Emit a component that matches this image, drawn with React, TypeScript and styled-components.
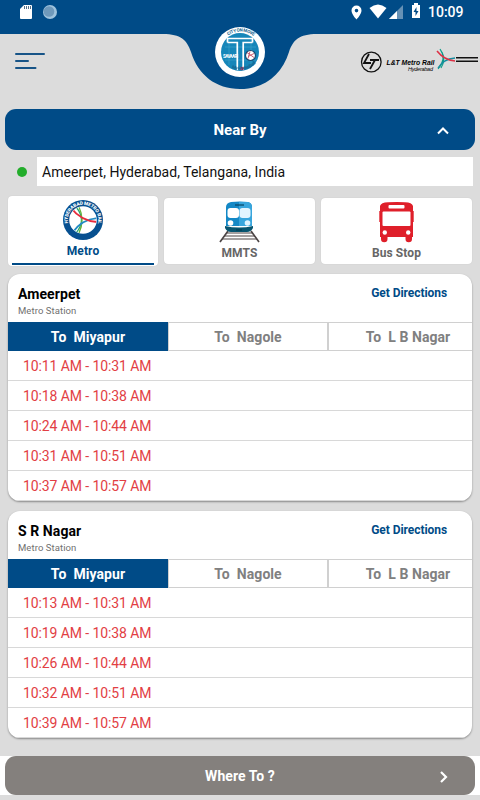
import React from 'react';
import styled, { createGlobalStyle } from 'styled-components';

const GlobalStyle = createGlobalStyle`
  * { box-sizing: border-box; }
  body { margin: 0; background: #dcdcdc; font-family: Roboto, sans-serif; }
  button { font-family: inherit; border: 0; padding: 0; margin: 0; background: none; }
  svg { display: block; flex: none; }
`;

const BLUE = '#004b87';

const Screen = styled.main`
  width: 480px;
  height: 800px;
  display: flex;
  flex-direction: column;
  overflow: hidden;
  background: #dcdcdc;
`;

const StatusBar = styled.div`
  height: 34px;
  flex: none;
  display: flex;
  align-items: flex-start;
  justify-content: space-between;
  padding: 0 16px 0 19px;
  background: ${BLUE};
  color: #fff;
`;

const StatusGroup = styled.div`
  display: flex;
  height: 24px;
  align-items: center;
`;

const Clock = styled.span`
  width: 36px;
  margin-left: 6px;
  font-size: 14px;
  line-height: 24px;
  font-weight: 500;
  white-space: nowrap;
`;

const Header = styled.header`
  height: 75px;
  flex: none;
  display: grid;
  grid-template-columns: 160px 160px 160px;
`;

const MenuButton = styled.button`
  width: 32px;
  height: 18px;
  margin: 18px 0 0 14px;
`;

const BrandMark = styled.div`
  margin-top: -14px;
`;

const Partner = styled.div`
  margin-top: 12px;
`;

const SectionBar = styled.button<{ $tone: string; $height: number }>`
  width: 470px;
  height: ${(p) => p.$height}px;
  flex: none;
  margin: 0 5px;
  display: grid;
  grid-template-columns: 1fr auto 1fr;
  align-items: center;
  border-radius: 11px;
  background: ${(p) => p.$tone};
  color: #fff;
`;

const SectionTitle = styled.span<{ $size: number; $spacing: number }>`
  grid-column: 2;
  font-size: ${(p) => p.$size}px;
  letter-spacing: ${(p) => p.$spacing}px;
  font-weight: 700;
`;

const SectionIcon = styled.span`
  justify-self: end;
  margin: 3px 25px 0 0;
`;

const LocationRow = styled.div`
  height: 29px;
  flex: none;
  margin: 7px 7px 0 17px;
  display: flex;
  align-items: center;
  gap: 10px;
`;

const Dot = styled.i`
  width: 10px;
  height: 10px;
  margin-top: 1px;
  border-radius: 50%;
  background: #23ad2b;
`;

const Address = styled.div`
  flex: 1;
  height: 29px;
  padding-left: 5px;
  background: #fff;
  color: #111;
  font-size: 14px;
  line-height: 30px;
  letter-spacing: 0.04px;
`;

const ModeTabs = styled.nav`
  height: 70px;
  flex: none;
  margin: 10px 8px 0;
  display: grid;
  grid-template-columns: 150px 151px 151px;
  gap: 6px;
  align-items: center;
`;

const ModeTab = styled.button<{ $active?: boolean }>`
  height: ${(p) => (p.$active ? 70 : 66)}px;
  display: flex;
  flex-direction: column;
  align-items: center;
  padding: ${(p) => (p.$active ? '3px 4px 0' : '3px 0 0')};
  border-radius: 4px;
  background: #fff;
  box-shadow: 0 0 1px rgba(0, 0, 0, 0.16);
  color: ${(p) => (p.$active ? BLUE : '#666')};
  font-size: 12px;
  font-weight: 700;
`;

const ModeName = styled.span<{ $active?: boolean }>`
  align-self: stretch;
  height: ${(p) => (p.$active ? 24 : 20)}px;
  line-height: 20px;
  letter-spacing: 0.1px;
  border-bottom: ${(p) => (p.$active ? `2px solid ${BLUE}` : '0')};
`;

const Stations = styled.section`
  display: flex;
  flex-direction: column;
  gap: 10px;
  padding: 8px 8px 0;
  height: 490px;
  flex: none;
`;

const Card = styled.article`
  height: 227px;
  flex: none;
  border-radius: 12px;
  overflow: hidden;
  background: #fff;
  box-shadow: 0 1px 2px rgba(0, 0, 0, 0.38);
`;

const CardHeader = styled.div`
  height: 48px;
  display: flex;
  justify-content: space-between;
  padding: 12px 25px 0 10px;
`;

const StationName = styled.h2`
  margin: 0;
  color: #000;
  font-size: 14px;
  line-height: 17px;
  font-weight: 700;
  letter-spacing: 0.08px;
`;

const StationKind = styled.div`
  color: #707070;
  font-size: 9.5px;
  line-height: 16px;
  letter-spacing: 0.08px;
`;

const Directions = styled.button`
  align-self: flex-start;
  color: ${BLUE};
  font-size: 12px;
  line-height: 15px;
  font-weight: 700;
  letter-spacing: -0.06px;
`;

const DirectionTabs = styled.div`
  display: grid;
  grid-template-columns: 160px 160px 144px;
`;

const DirectionTab = styled.button<{ $active?: boolean; $last?: boolean }>`
  height: 29px;
  border: 1px solid ${(p) => (p.$active ? BLUE : '#d0d0d0')};
  border-width: ${(p) => (p.$last ? '1px 0 1px 1px' : '1px')};
  padding-left: ${(p) => (p.$last ? 15 : 0)}px;
  background: ${(p) => (p.$active ? BLUE : '#fff')};
  color: ${(p) => (p.$active ? '#fff' : '#808080')};
  font-size: 14px;
  line-height: 29px;
  font-weight: 700;
  letter-spacing: 0.06px;
  white-space: pre;
`;

const Departure = styled.div`
  height: 30px;
  padding-left: 15px;
  border-bottom: 1px solid #d8d8d8;
  color: #e23e44;
  font-size: 14px;
  line-height: 30px;
  letter-spacing: -0.1px;
`;

const Footer = styled.footer`
  height: 39px;
  flex: none;
  background: #fff;
`;

function MetroIcon() {
  return (
    <svg width="42" height="42" viewBox="0 0 42 42">
      <defs>
        <path id="metro-arc" d="M6.200 25A15.300 15.300 0 1 1 35.800 25" />
        <clipPath id="metro-disc"><circle cx="21" cy="21" r="13.3" /></clipPath>
      </defs>
      <circle cx="21" cy="21" r="20" fill="#075090" />
      <circle cx="21" cy="21" r="13.8" fill="#fff" />
      <text fill="#fff" fontSize="4.8" fontWeight="900" textLength="54">
        <textPath href="#metro-arc" startOffset="1">HYDERABAD METRO RAIL</textPath>
      </text>
      <g clipPath="url(#metro-disc)" fill="none">
        <path d="M14 8Q25 21 14 34" stroke="#25a56a" strokeWidth="1.300" />
        <path d="M17 8Q23 21 17 34" stroke="#65b33c" strokeWidth="1.300" />
        <path d="M11 33Q20 20 36 19" stroke="#238bc4" strokeWidth="1.800" />
        <path d="M9 9Q20 23 37 23" stroke="#e62d3e" strokeWidth="2" />
      </g>
    </svg>
  );
}

function TrainIcon() {
  return (
    <svg width="42" height="42" viewBox="0 0 42 42">
      <g stroke="#4c4545" fill="none">
        <path d="m9 30-8 11m31-11 8 11" strokeWidth="1.7" />
        <path d="M7 32h27M5 35h31M3 38h35" strokeWidth="1.1" />
      </g>
      <path d="M7 25V6q0-4 5-5 9-1 17 0 4 1 4 5v19Z" fill="#1488c6" />
      <path d="M20 1h9q4 1 4 5v19H20Z" fill="#38a5dc" />
      <path d="M6 25q14 3 28 0v2q-2 4-6 4H12q-4 0-6-4Z" fill="#075570" />
      <path d="M16 4h9" stroke="#064362" strokeWidth="1.2" />
      <rect x="8.5" y="7" width="11.500" height="10" rx="3" fill="#fff" />
      <rect x="20.500" y="7" width="11" height="10" rx="3" fill="#e3f5ff" />
      <circle cx="11.500" cy="22" r="2.8" fill="#fff" />
      <circle cx="28.500" cy="22" r="2.8" fill="#dff4ff" />
      <path d="M17 29h6" stroke="#03384c" />
    </svg>
  );
}

function BusIcon() {
  return (
    <svg width="42" height="42" viewBox="0 0 42 42">
      <path fill="#df1f2a" d="M4 5Q5 1.500 12 1.200 21 .6 29 1.200 36 1.500 37 5v5h.7v11H37v15h-1v2a3 3 0 0 1-6.500 0v-2h-18v2a3 3 0 0 1-6.500 0v-2H4V21h-.7V10H4Z" />
      <rect x="12.5" y="4" width="16" height="3.5" rx="1" fill="#fff" />
      <rect x="6.500" y="10.500" width="28" height="14.500" rx="1" fill="#fff" />
      <circle cx="8.800" cy="31.500" r="2.2" fill="#fff" />
      <circle cx="32.200" cy="31.500" r="2.2" fill="#fff" />
    </svg>
  );
}

function BrandLogo() {
  return (
    <svg width="160" height="74" viewBox="0 0 160 74">
      <defs>
        <path id="brand-top" d="M60 32A20.5 20.5 0 0 1 101 32" />
        <path id="brand-bottom" d="M58 32A22.5 22.5 0 0 0 102 32" />
      </defs>
      <path d="M0 14h3C21 14 27 20 31 32 38 55 56 69 80 69s42-14 49-37c4-12 10-18 28-18h3V0H0Z" fill={BLUE} />
      <circle cx="80" cy="32" r="25" fill="#fff" />
      <circle cx="80" cy="32" r="19" fill="#1686b9" />
      <path d="M69 20v25M91 19v26M65 27h31M65 40h31" stroke="#39a1ca" strokeWidth=".7" />
      <path d="M67.500 22.500v-4h25v4M67.500 22.500h9.800V50M92.500 22.500h-9.300V50" fill="none" stroke="#fff" strokeWidth="1.7" />
      <text x="63" y="37.500" fill="#fff" fontSize="4.5" fontWeight="700" textLength="15">SAVAARI</text>
      <circle cx="90.5" cy="35.500" r="5" fill="#fff" stroke="#174b74" strokeWidth="1.2" />
      <path d="m87 32.500 7 5m-6 1 2-7m-2 5 6-3" stroke="#c85b70" strokeWidth="1" />
      <circle cx="82" cy="48.500" r="1.800" fill="#dc204f" />
      <text fill="#16638e" fontSize="4.5" fontWeight="700" textLength="27"><textPath href="#brand-top" startOffset="19">CITY ON MOVE</textPath></text>
      <text fill="#16638e" fontSize="4.5" fontWeight="700" textLength="26"><textPath href="#brand-bottom" startOffset="22">My Hyderabad</textPath></text>
    </svg>
  );
}

function PartnerLogo() {
  return (
    <svg width="160" height="32" viewBox="320 46 160 32">
      <circle cx="371.300" cy="62" r="9.8" fill="none" stroke="#111" strokeWidth="1.3" />
      <path d="m369 54-5 9h7m-1-3h9m-4 0-5 9" stroke="#111" strokeWidth="1.8" fill="none" />
      <text x="386.5" y="64.800" fontFamily="Liberation Sans" fontSize="8" fontStyle="italic" fontWeight="700" textLength="48" lengthAdjust="spacingAndGlyphs">L&amp;T Metro Rail</text>
      <text x="408" y="71" fontFamily="Liberation Sans" fontSize="5.5" fontStyle="italic" textLength="25">Hyderabad</text>
      <path d="M440 49q7 10-2 20M442 52q4 8-1 16" stroke="#0a9b88" fill="none" strokeWidth="1.1" />
      <path d="M438 68q5-9 17-10" stroke="#168c9f" fill="none" strokeWidth="1.3" />
      <path d="M437 51q7 9 18 10" stroke="#dd3145" fill="none" strokeWidth="1.5" />
      <path d="M456 57.700h22m-22 3.600h22" stroke="#111" strokeWidth="1.4" />
    </svg>
  );
}

const stations = [
  { name: 'Ameerpet', times: ['10:11 AM - 10:31 AM', '10:18 AM - 10:38 AM', '10:24 AM - 10:44 AM', '10:31 AM - 10:51 AM', '10:37 AM - 10:57 AM'] },
  { name: 'S R Nagar', times: ['10:13 AM - 10:31 AM', '10:19 AM - 10:38 AM', '10:26 AM - 10:44 AM', '10:32 AM - 10:51 AM', '10:39 AM - 10:57 AM'] },
];

function StationCard({ name, times }: { name: string; times: string[] }) {
  return (
    <Card>
      <CardHeader>
        <div>
          <StationName>{name}</StationName>
          <StationKind>Metro Station</StationKind>
        </div>
        <Directions>Get Directions</Directions>
      </CardHeader>
      <DirectionTabs>
        <DirectionTab $active>{'To  Miyapur'}</DirectionTab>
        <DirectionTab>{'To  Nagole'}</DirectionTab>
        <DirectionTab $last>{'To  L B Nagar'}</DirectionTab>
      </DirectionTabs>
      {times.map((time) => <Departure key={time}>{time}</Departure>)}
    </Card>
  );
}

export default function App() {
  return (
    <Screen>
      <GlobalStyle />
      <StatusBar>
        <StatusGroup>
          <svg width="40" height="24" viewBox="0 0 40 24">
            <path d="M1 9l4-4h7q1 0 1 1v12q0 1-1 1H2q-1 0-1-1Z" fill="#fff" />
            <path d="M5.500 6v3m2-3v3m2-3v3m2-3v3" stroke="#58738a" />
            <circle cx="31" cy="12" r="7" fill="#9fc3dd" />
            <circle cx="30" cy="11.5" r="5.3" fill="#6f99bb" />
          </svg>
        </StatusGroup>
        <StatusGroup>
          <svg width="72" height="24" viewBox="350 0 72 24">
            <path d="M356.5 5.5a5 5 0 0 0-5 5c0 3.7 5 9 5 9s5-5.3 5-9a5 5 0 0 0-5-5Zm0 3.3a1.8 1.8 0 1 1 0 3.6 1.8 1.8 0 0 1 0-3.6Z" fill="#fff" fillRule="evenodd" />
            <path d="M369.5 8q8.500-7 17 0L378 18.500Z" fill="#fff" />
            <path d="M389 19h14V5Z" fill="#6691b5" />
            <path d="M389 19h8v-8Z" fill="#fff" />
            <path d="M412 5h2V3h4v2h2v13h-8Z" fill="#fff" />
            <path d="m416.500 7-3 5h2v4l3-5h-2Z" fill={BLUE} />
          </svg>
          <Clock>10:09</Clock>
        </StatusGroup>
      </StatusBar>
      <Header>
        <MenuButton aria-label="Menu">
          <svg width="32" height="18" viewBox="0 0 32 18">
            <path d="M2 2h28M2 9h12M2 16h19.500" stroke="#175487" strokeWidth="2" strokeLinecap="round" />
          </svg>
        </MenuButton>
        <BrandMark><BrandLogo /></BrandMark>
        <Partner><PartnerLogo /></Partner>
      </Header>
      <SectionBar $tone={BLUE} $height={41}>
        <SectionTitle $size={15} $spacing={0}>Near By</SectionTitle>
        <SectionIcon>
          <svg width="14" height="10" viewBox="0 0 14 10"><path d="m2 7.500 5-5 5 5" fill="none" stroke="#fff" strokeWidth="2" /></svg>
        </SectionIcon>
      </SectionBar>
      <LocationRow>
        <Dot />
        <Address>Ameerpet, Hyderabad, Telangana, India</Address>
      </LocationRow>
      <ModeTabs>
        <ModeTab $active><MetroIcon /><ModeName $active>Metro</ModeName></ModeTab>
        <ModeTab><TrainIcon /><ModeName>MMTS</ModeName></ModeTab>
        <ModeTab><BusIcon /><ModeName>Bus Stop</ModeName></ModeTab>
      </ModeTabs>
      <Stations>
        {stations.map((station) => <StationCard key={station.name} {...station} />)}
      </Stations>
      <Footer>
        <SectionBar $tone="#84807d" $height={39}>
          <SectionTitle $size={14} $spacing={0.06}>Where To ?</SectionTitle>
          <SectionIcon>
            <svg width="14" height="14" viewBox="0 0 14 14"><path d="m5 2 5 5-5 5" fill="none" stroke="#fff" strokeWidth="2.200" /></svg>
          </SectionIcon>
        </SectionBar>
      </Footer>
    </Screen>
  );
}
